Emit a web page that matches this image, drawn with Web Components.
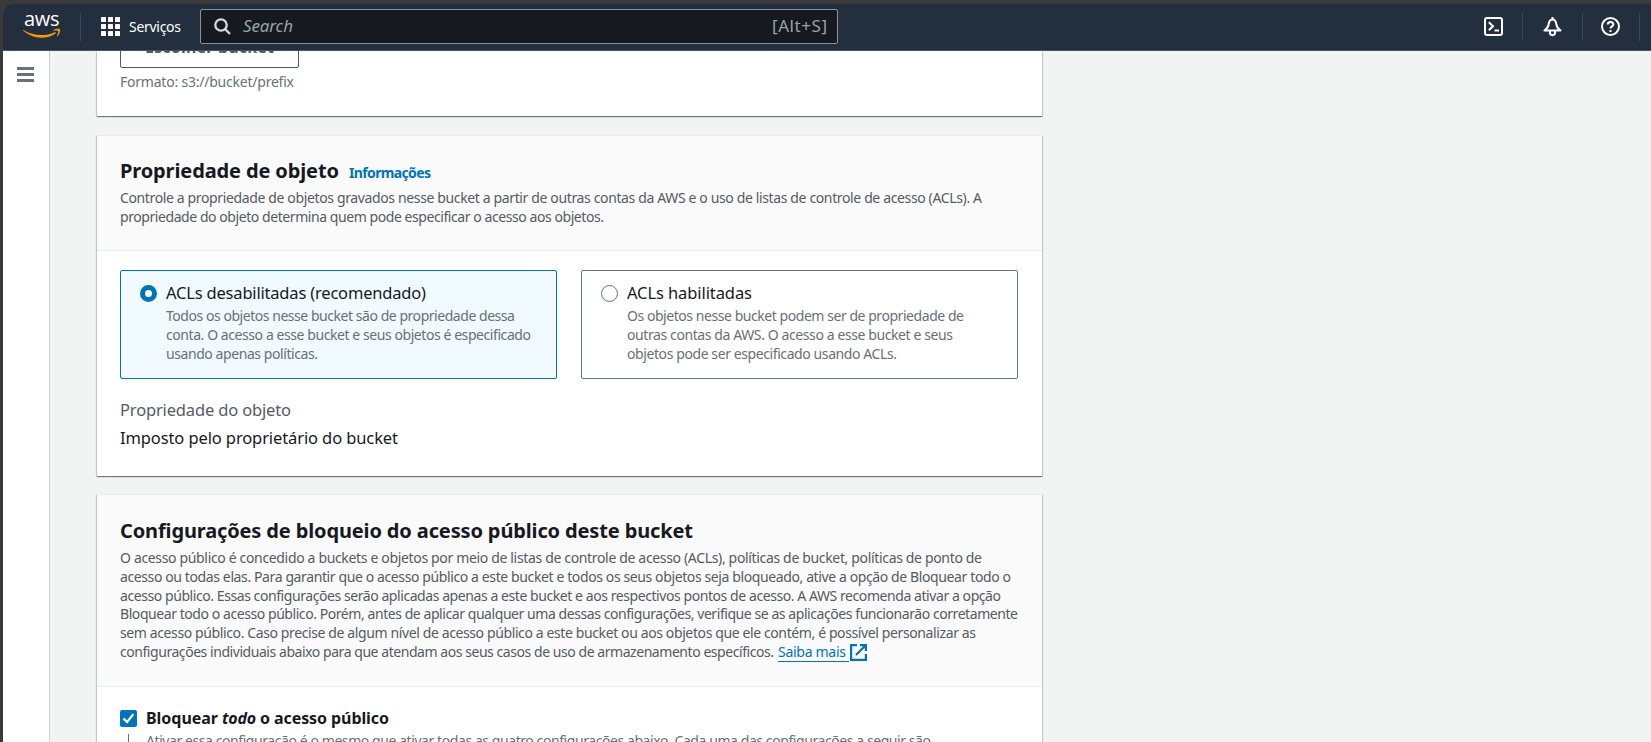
<!DOCTYPE html>
<html lang="pt-BR">
<head>
<meta charset="utf-8">
<title>Criar bucket</title>
<style>
  html, body { margin: 0; height: 100%; overflow: hidden; background: #3a3a3a; }
  body { font-family: "Noto Sans", "Open Sans", sans-serif; font-size: 14px; color: #545b64; }
</style>
</head>
<body>
<console-app></console-app>
<script>
const define = (name, html, setup) => {
  const tpl = document.createElement('template');
  tpl.innerHTML = html.trim();
  customElements.define(name, class extends HTMLElement {
    constructor() {
      super();
      this.attachShadow({ mode: 'open' }).append(tpl.content.cloneNode(true));
    }
    connectedCallback() { if (setup) setup.call(this, this.shadowRoot); }
  });
};

/* A single line of copy whose tracking is adjusted to a given measure. */
define('text-line', `
  <style>
    :host { display: block; white-space: pre; height: var(--lh, 19px); line-height: var(--lh, 19px); letter-spacing: .01px; }
    span { display: block; width: max-content; }
  </style><span><slot></slot></span>`, function (root) {
  const w = Number(this.getAttribute('w'));
  this.style.width = w + 'px';
  const span = root.querySelector('span');
  const n = this.textContent.length;
  const natural = span.getBoundingClientRect().width;
  this.style.letterSpacing = ((w - natural) / (n - 1) + .01).toFixed(4) + 'px';
});

define('aws-logo', `
  <style>
    :host { display: block; width: 38px; height: 25px; position: relative; color: #fff; }
    b { position: absolute; left: 1px; top: -7px; font: 500 20px/24px "Open Sans", sans-serif; letter-spacing: -.3px; }
    svg { position: absolute; left: 0; top: 14px; }
  </style>
  <b>aws</b>
  <svg width="38" height="11" viewBox="0 0 38 11" fill="#f90"><path d="M.4 1.9C5.500 5.200 11.700 7.100 18.200 7.100c4.700 0 9.400-1 13.700-2.900.8-.3 1.400.6.700 1.200C28.900 8.200 23.400 9.700 18.600 9.700 11.600 9.700 5.300 7.100.2 2.500-.2 2.100 0 1.700.4 1.900z"/><path d="M30.400 2c1.900-1.300 5.900-1.500 6.500-.8.6.8-.1 5-2.400 7-.4.300-.7.100-.5-.3.5-1.300 1.700-4.200 1.200-4.900-.6-.7-3.400-.4-4.500-.2-.5 0-.6-.4-.3-.8z"/></svg>`);

define('nav-rule', `<style>:host{display:block;width:1px;height:28px;background:#414750;}</style>`);

define('top-nav', `
  <style>
    :host { display: flex; align-items: center; height: 46px; box-sizing: content-box; background: #232f3e; border-bottom: 1px solid #4a5361; border-top-left-radius: 11px; color: #fff; padding-left: 20px; }
    svg { display: block; flex: none; }
    aws-logo { margin-top: -1px; }
    .services { display: flex; align-items: center; gap: 9px; margin: -1px 0 0 20px; }
    .first { margin-left: 19px; }
    .search { display: flex; align-items: center; box-sizing: border-box; width: 638px; height: 35px; margin-left: 19px; border: 1px solid #879596; border-radius: 2px; background: #16191f; padding: 0 10px 0 13px; color: #95a5a6; font-size: 17px; --lh: 24px; margin-top: -1px; }
    .search em { margin: -2px 0 0 12px; }
    .search .key { margin-left: auto; margin-top: -1px; }
    .tools { display: flex; align-items: center; margin-left: auto; width: 167px; margin-top: -1px; }
    .tools svg:nth-of-type(2) { margin: 0 20px 0 20px; }
    .tools svg:nth-of-type(3) { margin: 0 19px 0 18px; }
  </style>
  <aws-logo></aws-logo>
  <nav-rule class="first"></nav-rule>
  <div class="services">
    <svg width="19" height="19" fill="#fff"><rect width="5" height="5" rx=".6"/><rect x="7" width="5" height="5" rx=".6"/><rect x="14" width="5" height="5" rx=".6"/><rect y="7" width="5" height="5" rx=".6"/><rect x="7" y="7" width="5" height="5" rx=".6"/><rect x="14" y="7" width="5" height="5" rx=".6"/><rect y="14" width="5" height="5" rx=".6"/><rect x="7" y="14" width="5" height="5" rx=".6"/><rect x="14" y="14" width="5" height="5" rx=".6"/></svg>
    <text-line w="52">Serviços</text-line>
  </div>
  <div class="search">
    <svg width="17" height="17" fill="none" stroke="#d5dbdb" stroke-width="2.300"><circle cx="7" cy="7" r="5.700"/><path d="M11 11l5 5"/></svg>
    <em><text-line w="50">Search</text-line></em>
    <span class="key"><text-line w="55">[Alt+S]</text-line></span>
  </div>
  <div class="tools">
    <svg width="19" height="19" fill="none" stroke="#fff" stroke-width="2"><rect x="1" y="1" width="17" height="17" rx="2"/><path d="M4.800 5.200l4.200 4-4.200 4M10.500 13.400h4.500"/></svg>
    <nav-rule style="margin-left:19px"></nav-rule>
    <svg width="19" height="20" fill="none" stroke="#fff" stroke-width="2"><path d="M9.500 0v2.500M1.400 13.500c2.900-2 3.800-3.500 4.200-6 .4-2.900 1.400-5 3.900-5s3.500 2.100 3.900 5c.4 2.500 1.300 4 4.200 6z" stroke-linejoin="round"/><path d="M6.900 14v1.600a2.600 2.600 0 005.200 0V14"/></svg>
    <nav-rule></nav-rule>
    <svg width="19" height="19" fill="none" stroke="#fff" stroke-width="2"><circle cx="9.500" cy="9.500" r="8.500"/><path d="M6.700 7.600c0-1.700 1.200-2.700 2.800-2.700s2.800 1 2.800 2.500c0 2-2.800 1.900-2.800 4.100M9.500 12.900v2"/></svg>
    <nav-rule></nav-rule>
  </div>`);

define('side-rail', `
  <style>:host{display:block;box-sizing:border-box;width:47px;background:#fff;border-right:1px solid #cdd3d4;padding:16px 0 0 14px;}svg{display:block}</style>
  <svg width="17" height="15" fill="#687078"><rect width="17" height="3"/><rect y="6" width="17" height="3"/><rect y="12" width="17" height="3"/></svg>`);

define('form-panel', `
  <style>
    :host { display: block; box-sizing: border-box; width: 945px; background: #fff; border-top: 1px solid #eaeded; box-shadow: 0 1px 1px 0 rgba(0,28,36,.36), 1px 1px 1px 0 rgba(0,28,36,.15), -1px 1px 1px 0 rgba(0,28,36,.15); }
    header { box-sizing: border-box; height: var(--head, 115px); padding: var(--pt, 23px) 23px 0; background: #fafafa; border-bottom: 1px solid #eaeded; }
    .title { display: flex; gap: 10px; height: 24px; margin-bottom: var(--gap, 5px); color: #16191f; font-weight: 700; font-size: 20px; --lh: 24px; }
    .body { padding: 19px 24px 0 23px; }
  </style>
  <header><div class="title"><slot name="title"></slot></div><slot name="desc"></slot></header>
  <div class="body"><slot></slot></div>`);

define('radio-tile', `
  <style>
    :host { display: flex; box-sizing: border-box; width: 437px; height: 109px; border: 1px solid #687078; border-radius: 2px; padding: 12px 0 0 19px; gap: 9px; color: #687078; }
    :host([checked]) { border-color: #0073bb; background: #f1faff; }
    i { box-sizing: border-box; width: 17px; height: 17px; border: 1px solid #687078; border-radius: 50%; background: #fff; margin-top: 2px; flex: none; }
    :host([checked]) i { border: 5.500px solid #0073bb; }
    .label { color: #16191f; font-size: 16.500px; font-weight: 450; --lh: 20px; height: 23px; }
  </style>
  <i></i><div><div class="label"><slot name="label"></slot></div><slot></slot></div>`);

define('ext-link', `
  <style>
    :host { display: flex; color: #0073bb; }
    u { display: block; text-decoration: none; border-bottom: 1px solid #0073bb; width: 71px; height: 18px; }
    svg { display: block; margin: 1px 0 0 1px; }
  </style>
  <u><text-line w="68">Saiba mais</text-line></u>
  <svg width="17" height="17" fill="none" stroke="#0073bb" stroke-width="2.200"><path d="M7 1.100H1.100v14.800h14.800V10M10 1.100h5.900V7M15.500 1.500L6 11"/></svg>`);

define('check-row', `
  <style>
    :host { display: flex; gap: 9px; color: #687078; }
    .box { width: 17px; display: flex; flex-direction: column; align-items: center; gap: 7px; padding-top: 4px; }
    .pipe { width: 1px; height: 40px; background: #687078; }
    .label { display: flex; gap: 4px; color: #16191f; font-weight: 700; font-size: 16px; --lh: 24px; margin-bottom: 1px; }
    svg { display: block; }
  </style>
  <div class="box"><svg width="17" height="17"><rect width="17" height="17" rx="2" fill="#0073bb"/><path d="M3.500 8.500l3.500 3.600 6.300-8" fill="none" stroke="#fff" stroke-width="2.200"/></svg><div class="pipe"></div></div>
  <div><div class="label"><text-line w="72">Bloquear</text-line><em><text-line w="34">todo</text-line></em><text-line w="129">o acesso público</text-line></div>
  <slot></slot></div>`);

define('bucket-source', `
  <style>
    :host { display: flex; box-sizing: border-box; width: 945px; height: 65px; background: #fff; padding: 0 23px; margin-bottom: 19px; box-shadow: 0 1px 1px 0 rgba(0,28,36,.36), 1px 1px 1px 0 rgba(0,28,36,.15), -1px 1px 1px 0 rgba(0,28,36,.15); }
    .btn { box-sizing: border-box; width: 179px; height: 34px; border: 1px solid #545b64; border-radius: 2px; padding-left: 24px; font-size: 16px; font-weight: 700; color: #545b64; --lh: 25px; }
    .wrap { display: flex; flex-direction: column; margin-top: -17px; gap: 4px; color: #687078; }
  </style>
  <div class="wrap"><div class="btn"><text-line w="129">Escolher bucket</text-line></div><text-line w="174">Formato: s3://bucket/prefix</text-line></div>`);

define('console-app', `
  <style>
    :host { display: flex; flex-direction: column; box-sizing: border-box; height: 742px; padding: 4px 0 0 3px; overflow: hidden; }
    .shell { display: flex; flex: 1; min-height: 0; background: #f2f3f3; }
    main { flex: 1; padding-left: 47px; overflow: hidden; }
    .tiles { display: flex; gap: 24px; margin-bottom: 18px; }
    .big { font-size: 16.500px; --lh: 26px; }
    .dark { color: #16191f; font-weight: 450; margin-top: 2px; }
    .info { font-size: 14px; color: #0073bb; --lh: 28px; }
    .second { height: 341px; margin-bottom: 18px; }
    .third { --head: 192px; --pt: 24px; --gap: 6px; height: 400px; }
    .third .p { --lh: 18.800px; }
    .last { display: flex; gap: 4px; }
    top-nav { position: relative; z-index: 1; }
  </style>
  <top-nav></top-nav>
  <div class="shell">
    <side-rail></side-rail>
    <main>
      <bucket-source></bucket-source>
      <form-panel class="second">
        <text-line slot="title" w="219">Propriedade de objeto</text-line>
        <text-line slot="title" class="info" w="82">Informações</text-line>
        <div slot="desc">
          <text-line w="862">Controle a propriedade de objetos gravados nesse bucket a partir de outras contas da AWS e o uso de listas de controle de acesso (ACLs). A</text-line>
          <text-line w="484">propriedade do objeto determina quem pode especificar o acesso aos objetos.</text-line>
        </div>
        <div class="tiles">
          <radio-tile checked>
            <text-line slot="label" w="260">ACLs desabilitadas (recomendado)</text-line>
            <text-line w="349">Todos os objetos nesse bucket são de propriedade dessa</text-line>
            <text-line w="365">conta. O acesso a esse bucket e seus objetos é especificado</text-line>
            <text-line w="152">usando apenas políticas.</text-line>
          </radio-tile>
          <radio-tile>
            <text-line slot="label" w="125">ACLs habilitadas</text-line>
            <text-line w="337">Os objetos nesse bucket podem ser de propriedade de</text-line>
            <text-line w="326">outras contas da AWS. O acesso a esse bucket e seus</text-line>
            <text-line w="270">objetos pode ser especificado usando ACLs.</text-line>
          </radio-tile>
        </div>
        <text-line class="big" w="171">Propriedade do objeto</text-line>
        <text-line class="big dark" w="278">Imposto pelo proprietário do bucket</text-line>
      </form-panel>
      <form-panel class="third">
        <text-line slot="title" w="573">Configurações de bloqueio do acesso público deste bucket</text-line>
        <div slot="desc" class="p">
          <text-line w="862">O acesso público é concedido a buckets e objetos por meio de listas de controle de acesso (ACLs), políticas de bucket, políticas de ponto de</text-line>
          <text-line w="891">acesso ou todas elas. Para garantir que o acesso público a este bucket e todos os seus objetos seja bloqueado, ative a opção de Bloquear todo o</text-line>
          <text-line w="881">acesso público. Essas configurações serão aplicadas apenas a este bucket e aos respectivos pontos de acesso. A AWS recomenda ativar a opção</text-line>
          <text-line w="898">Bloquear todo o acesso público. Porém, antes de aplicar qualquer uma dessas configurações, verifique se as aplicações funcionarão corretamente</text-line>
          <text-line w="856">sem acesso público. Caso precise de algum nível de acesso público a este bucket ou aos objetos que ele contém, é possível personalizar as</text-line>
          <div class="last"><text-line w="654">configurações individuais abaixo para que atendam aos seus casos de uso de armazenamento específicos.</text-line><ext-link></ext-link></div>
        </div>
        <check-row><text-line w="785">Ativar essa configuração é o mesmo que ativar todas as quatro configurações abaixo. Cada uma das configurações a seguir são</text-line></check-row>
      </form-panel>
    </main>
  </div>`);
</script>
</body>
</html>
